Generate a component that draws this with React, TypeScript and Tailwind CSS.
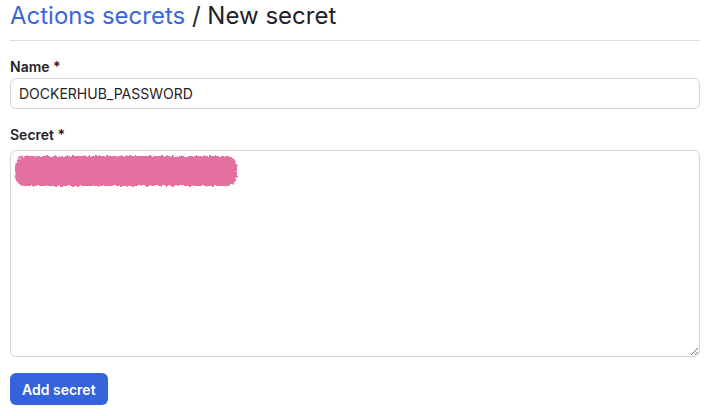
export default function App() {
  return (
    <div
      className="w-[716px] h-[416px] bg-white text-[#1f2328] pl-[10px] pr-[16px] overflow-hidden"
      style={{ fontFamily: 'Inter, "Liberation Sans", sans-serif' }}
    >
      <h1 className="text-[24px] leading-[30px] pt-[1px] pb-[9px] border-b border-[#d8dee4] font-normal">
        <a className="text-[#3a67d8]">Actions secrets</a> / New secret
      </h1>

      <form className="pt-[18px]">
        <label className="block text-[14px] font-semibold leading-[16px] mb-[3px]">Name *</label>
        <input
          type="text"
          defaultValue="DOCKERHUB_PASSWORD"
          className="block w-full h-[31px] px-[8px] text-[14px] border border-[#d0d7de] rounded-[6px] bg-white outline-none"
        />

        <label className="block text-[14px] font-semibold leading-[16px] mt-[18px] mb-[7px]">Secret *</label>
        <div className="relative">
          <textarea className="block w-full h-[207px] border border-[#d0d7de] rounded-[6px] bg-white outline-none resize-y" />
          <svg className="absolute left-[2px] top-[3px]" width="228" height="36" viewBox="0 0 228 36">
            <defs>
              <filter id="rough" x="-5%" y="-20%" width="110%" height="140%">
                <feTurbulence type="fractalNoise" baseFrequency="0.35" numOctaves="2" seed="4" />
                <feDisplacementMap in="SourceGraphic" scale="4" />
              </filter>
            </defs>
            <rect x="3" y="3" width="222" height="30" rx="10" fill="#e46f9f" filter="url(#rough)" />
          </svg>
        </div>

        <button
          type="button"
          className="mt-[16px] h-[32px] px-[12px] rounded-[6px] bg-[#3563dc] text-white text-[14px] font-semibold"
        >
          Add secret
        </button>
      </form>
    </div>
  );
}
